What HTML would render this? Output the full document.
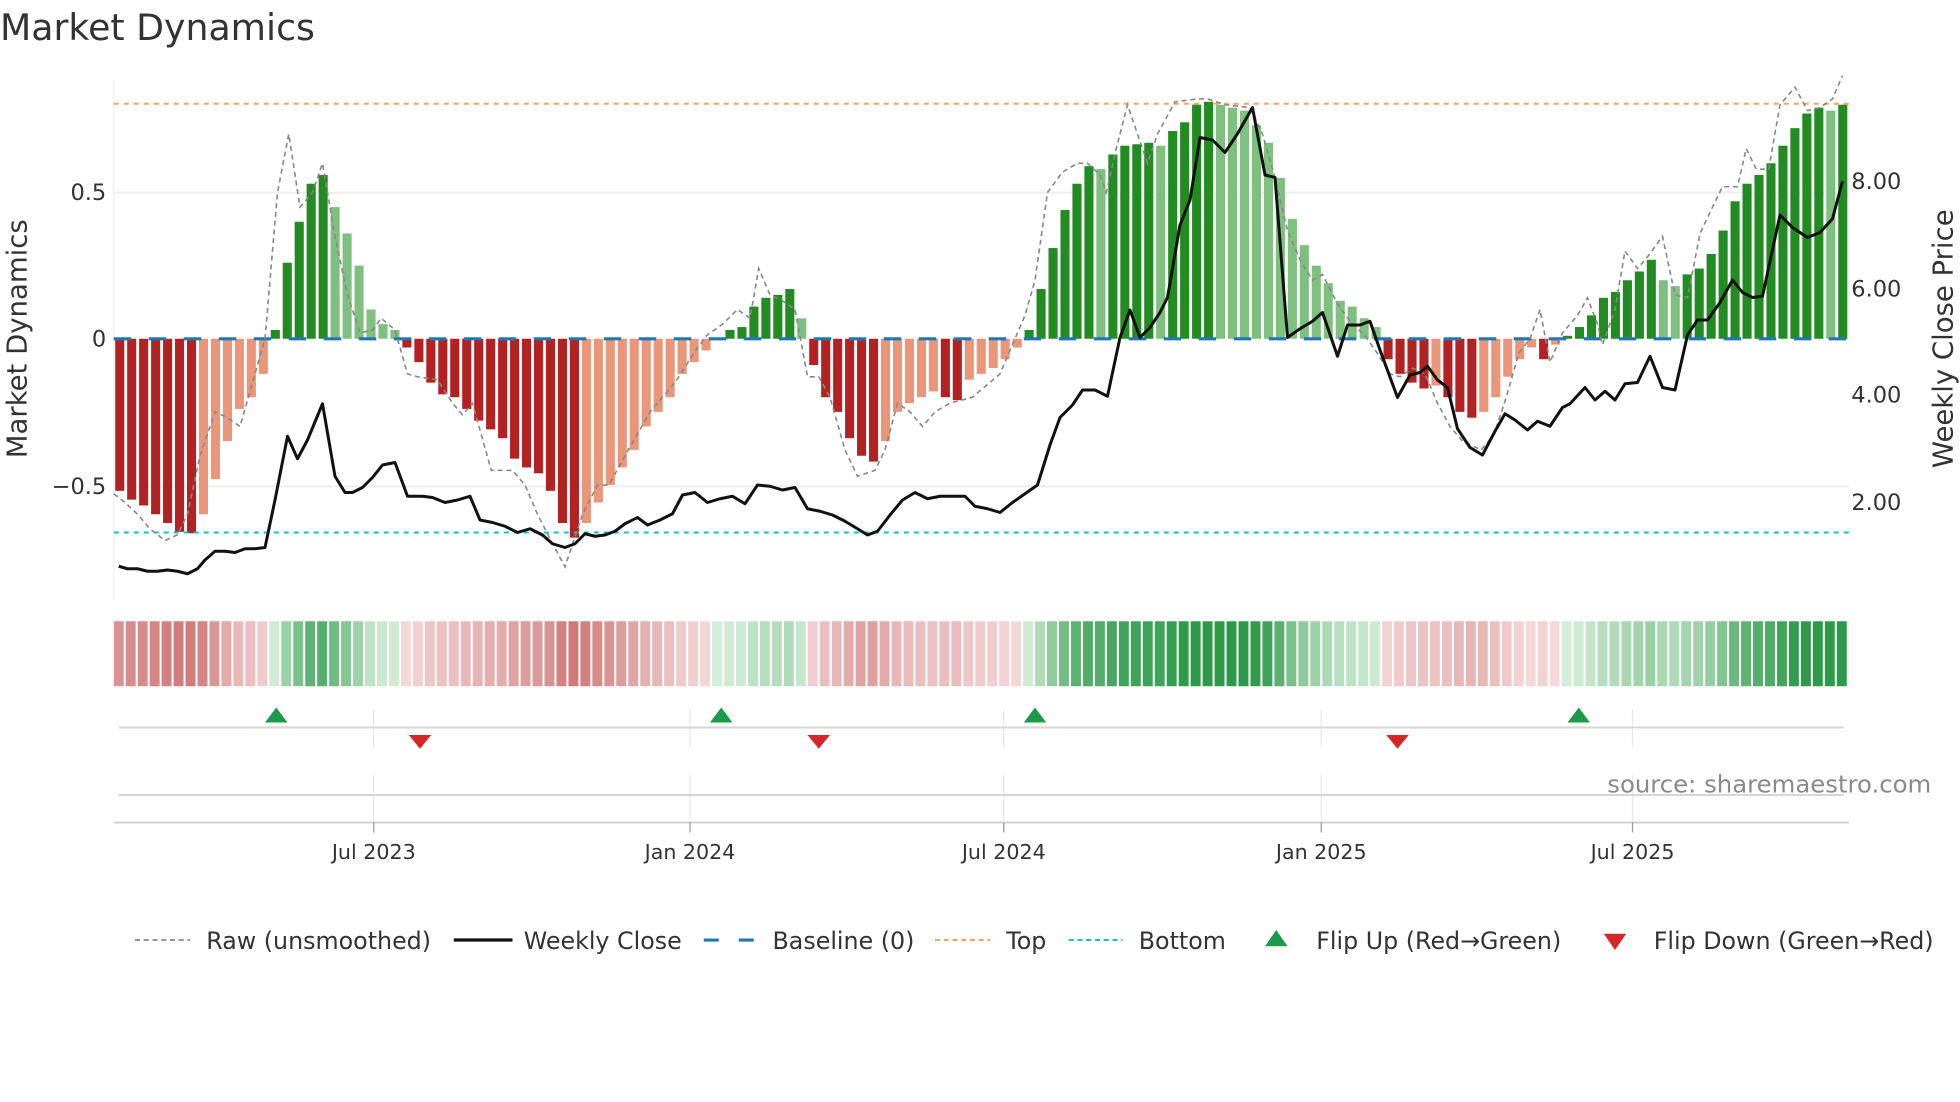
<!DOCTYPE html>
<html><head><meta charset="utf-8">
<style>
html,body{margin:0;padding:0;background:#fff;}
svg{display:block;}
text{font-family:"DejaVu Sans","Liberation Sans",sans-serif;fill:#333;}
</style></head>
<body>
<svg id="s" width="1960" height="1102" viewBox="0 0 1568 881.6" xmlns="http://www.w3.org/2000/svg">
<text x="0" y="32" font-size="29">Market Dynamics</text>
</svg>
<script>
var s=document.getElementById('s');var h='';
function Y(v){return 271-234*v;}
h+='<line x1="91" y1="65" x2="91" y2="480" stroke="#eceef3" stroke-width="1"/>';
h+='<line x1="91" y1="154" x2="1479" y2="154" stroke="#eceef3" stroke-width="1.5"/>';
h+='<line x1="91" y1="389" x2="1479" y2="389" stroke="#eceef3" stroke-width="1.5"/>';
h+='<text x="85" y="160" font-size="18" text-anchor="end">0.5</text>';
h+='<text x="85" y="277" font-size="18" text-anchor="end">0</text>';
h+='<text x="85" y="395" font-size="18" text-anchor="end">\u22120.5</text>';
h+='<text transform="translate(21,271) rotate(-90)" font-size="22" text-anchor="middle">Market Dynamics</text>';
[["8.00",145],["6.00",231],["4.00",316],["2.00",402]].forEach(function(a){h+='<text x="1481" y="'+(a[1]+6)+'" font-size="18">'+a[0]+'</text>';});
h+='<text transform="translate(1562,271) rotate(-90)" font-size="22" text-anchor="middle">Weekly Close Price</text>';
var v=[-0.52,-0.55,-0.57,-0.6,-0.63,-0.66,-0.665,
-0.6,-0.48,-0.35,-0.24,-0.2,-0.12,
0.03,0.26,0.4,0.53,0.56,
0.45,0.36,0.25,0.1,0.05,0.03,
-0.03,-0.08,-0.15,-0.19,-0.2,-0.24,-0.28,-0.31,-0.34,-0.41,-0.44,-0.46,-0.52,-0.63,-0.68,
-0.63,-0.56,-0.5,-0.44,-0.38,-0.3,-0.25,-0.2,-0.12,-0.08,-0.04,
0.003,0.03,0.04,0.11,0.14,0.15,0.17,0.07,
-0.09,-0.2,-0.25,-0.34,-0.4,-0.42,
-0.35,-0.25,-0.22,-0.2,-0.18,-0.2,-0.21,-0.14,-0.12,-0.1,-0.07,-0.03,
0.03,0.17,0.31,0.44,0.53,0.59,0.58,0.63,0.66,0.665,0.67,
0.66,0.71,0.74,0.8,0.81,
0.8,0.79,0.78,0.73,0.67,0.55,0.41,0.32,0.25,0.19,0.13,0.11,0.07,0.04,
-0.07,-0.12,-0.15,-0.17,-0.16,-0.2,-0.25,-0.27,
-0.25,-0.2,-0.13,-0.07,-0.03,-0.07,-0.02,
0.01,0.04,0.08,0.14,0.16,0.2,0.23,0.27,
0.2,0.18,0.22,0.24,0.29,0.37,0.47,0.53,0.56,0.6,0.66,0.72,0.77,0.79,0.78,0.8];
var N=v.length,P=1388/N;
h+='<line x1="91" y1="83" x2="1479" y2="83" stroke="#f4a460" stroke-width="1.6" stroke-dasharray="4,4"/>';
for(var i=0;i<N;i++){var x=91+P*i+P*0.12,w=P*0.76,a=v[i],p=i?v[i-1]:0;
var dark=Math.abs(a)>=Math.abs(p)||(a*p<0);var c=a>=0?(dark?'#228b22':'#7fbf7f'):(dark?'#b22222':'#e9967a');
var y0=Math.min(Y(a),271),hh=Math.abs(Y(a)-271);h+='<rect x="'+x.toFixed(2)+'" y="'+y0.toFixed(2)+'" width="'+w.toFixed(2)+'" height="'+hh.toFixed(2)+'" fill="'+c+'"/>';
var t=Math.min(Math.abs(a)/0.75,1),col;
if(a<0){col='rgb('+Math.round(246-42*t)+','+Math.round(220-108*t)+','+Math.round(220-108*t)+')';}
else{col='rgb('+Math.round(214-170*t)+','+Math.round(238-84*t)+','+Math.round(218-146*t)+')';}
h+='<rect x="'+(91+P*i).toFixed(2)+'" y="497" width="'+(P-1.6).toFixed(2)+'" height="52" fill="'+col+'"/>';
}
h+='<line x1="91" y1="271" x2="1479" y2="271" stroke="#1f77b4" stroke-width="2.5" stroke-dasharray="14,14"/>';
h+='<line x1="91" y1="426" x2="1479" y2="426" stroke="#17becf" stroke-width="1.6" stroke-dasharray="4,4"/>';
var raw=[[91,-0.53],[100,-0.56],[110,-0.6],[120,-0.65],[132,-0.69],[142,-0.67],[150,-0.6],[160,-0.4],[172,-0.25],[182,-0.27],[192,-0.3],[202,-0.15],[212,0],[222,0.5],[231,0.7],[240,0.45],[250,0.5],[258,0.6],[268,0.35],[278,0.15],[288,0.02],[298,0.03],[305,0.07],[316,0.03],[326,-0.12],[334,-0.13],[350,-0.14],[362,-0.22],[370,-0.26],[378,-0.22],[393,-0.45],[410,-0.45],[420,-0.5],[430,-0.6],[442,-0.7],[452,-0.78],[466,-0.6],[478,-0.5],[487,-0.5],[500,-0.4],[520,-0.25],[540,-0.15],[555,-0.05],[565,0.01],[578,0.05],[590,0.1],[600,0.07],[607,0.24],[616,0.15],[626,0.13],[636,0.1],[646,-0.13],[655,-0.13],[664,-0.2],[676,-0.38],[686,-0.47],[700,-0.45],[708,-0.38],[718,-0.22],[728,-0.25],[738,-0.3],[748,-0.25],[760,-0.22],[778,-0.2],[800,-0.12],[812,0],[820,0.08],[828,0.2],[838,0.5],[850,0.57],[862,0.6],[870,0.6],[880,0.56],[885,0.5],[893,0.65],[902,0.8],[910,0.7],[918,0.6],[926,0.7],[940,0.81],[958,0.82],[966,0.82],[980,0.8],[1000,0.79],[1010,0.7],[1020,0.55],[1030,0.37],[1040,0.27],[1050,0.2],[1058,0.22],[1070,0.12],[1080,0.06],[1092,0.01],[1102,-0.05],[1112,-0.12],[1120,-0.13],[1130,-0.1],[1140,-0.12],[1150,-0.22],[1160,-0.3],[1170,-0.35],[1185,-0.38],[1195,-0.33],[1205,-0.2],[1215,-0.05],[1224,0],[1232,0.1],[1240,-0.08],[1250,0.02],[1262,0.08],[1270,0.14],[1278,0.05],[1282,-0.02],[1292,0.1],[1300,0.3],[1310,0.24],[1318,0.28],[1330,0.35],[1340,0.15],[1350,0.14],[1360,0.36],[1370,0.45],[1378,0.52],[1390,0.52],[1397,0.65],[1405,0.58],[1415,0.58],[1424,0.8],[1436,0.86],[1446,0.78],[1456,0.79],[1466,0.82],[1474,0.9]];
h+='<polyline fill="none" stroke="#888" stroke-width="1.3" stroke-dasharray="4,3" points="'+raw.map(function(q){return q[0]+','+Y(q[1]).toFixed(1);}).join(' ')+'"/>';
var pr=[[95,453],[102,455],[110,455],[118,457],[126,457],[134,456],[142,457],[150,459],[158,455],[164,448],[172,441],[180,441],[188,442],[196,439],[204,439],[212,438],[220,400],[230,349],[238,367],[246,352],[258,323],[268,381],[276,394],[282,394],[290,390],[298,382],[306,372],[316,370],[326,397],[338,397],[346,398],[356,402],[366,400],[376,397],[384,416],[394,418],[404,421],[414,426],[424,423],[434,428],[442,435],[452,438],[460,435],[468,427],[476,429],[484,428],[492,425],[500,419],[510,414],[518,420],[528,416],[538,411],[546,396],[556,394],[566,402],[576,399],[586,397],[596,403],[606,388],[616,389],[626,392],[636,390],[646,407],[656,409],[666,412],[676,417],[686,423],[694,428],[702,425],[712,412],[722,400],[732,394],[742,399],[752,397],[762,397],[772,397],[780,405],[790,407],[800,410],[810,402],[820,395],[830,388],[840,356],[848,334],[858,324],[866,312],[876,312],[886,317],[896,270],[904,248],[912,270],[920,262],[928,250],[934,238],[944,180],[952,160],[960,110],[970,112],[980,122],[990,107],[1002,86],[1012,140],[1020,142],[1030,270],[1040,263],[1050,257],[1058,250],[1070,285],[1078,260],[1088,260],[1096,257],[1104,280],[1118,318],[1128,300],[1136,298],[1142,293],[1150,304],[1158,310],[1166,343],[1176,358],[1186,364],[1196,345],[1204,331],[1212,336],[1222,344],[1230,337],[1240,341],[1250,326],[1256,323],[1268,310],[1276,320],[1284,313],[1292,320],[1300,307],[1310,306],[1320,285],[1330,310],[1340,312],[1350,268],[1358,256],[1366,256],[1376,242],[1386,224],[1394,234],[1402,238],[1410,237],[1424,172],[1434,182],[1446,190],[1456,186],[1466,175],[1474,145]];
h+='<polyline fill="none" stroke="#111" stroke-width="2.4" stroke-linejoin="round" points="'+pr.map(function(q){return q.join(',');}).join(' ')+'"/>';
[299,552,803,1057,1306].forEach(function(x){h+='<line x1="'+x+'" y1="568" x2="'+x+'" y2="598" stroke="#e6e8ee" stroke-width="1"/><line x1="'+x+'" y1="620" x2="'+x+'" y2="658" stroke="#e6e8ee" stroke-width="1"/>';});
h+='<line x1="95" y1="582" x2="1475" y2="582" stroke="#d6d6d6" stroke-width="1.6"/>';
h+='<line x1="95" y1="636" x2="1475" y2="636" stroke="#d6d6d6" stroke-width="1.6"/>';
h+='<line x1="91" y1="658" x2="1479" y2="658" stroke="#d0d0d0" stroke-width="1.6"/>';
[221,577,828,1263].forEach(function(x){h+='<polygon points="'+(x-9)+',578 '+(x+9)+',578 '+x+',566" fill="#1a9a4a"/>';});
[336,655,1118].forEach(function(x){h+='<polygon points="'+(x-9)+',588 '+(x+9)+',588 '+x+',599" fill="#d62728"/>';});
h+='<text x="1545" y="634" font-size="19.5" style="fill:#8a8a8a" text-anchor="end">source: sharemaestro.com</text>';
[["Jul 2023",299],["Jan 2024",552],["Jul 2024",803],["Jan 2025",1057],["Jul 2025",1306]].forEach(function(a){h+='<line x1="'+a[1]+'" y1="658" x2="'+a[1]+'" y2="666" stroke="#999"/><text x="'+a[1]+'" y="687" font-size="16.5" text-anchor="middle">'+a[0]+'</text>';});
var ly=752;
h+='<line x1="108" y1="'+ly+'" x2="152" y2="'+ly+'" stroke="#888" stroke-width="1.4" stroke-dasharray="4,3"/><text x="165" y="'+(ly+7)+'" font-size="19">Raw (unsmoothed)</text>';
h+='<line x1="363" y1="'+ly+'" x2="410" y2="'+ly+'" stroke="#111" stroke-width="2.6"/><text x="419" y="'+(ly+7)+'" font-size="19">Weekly Close</text>';
h+='<line x1="563" y1="'+ly+'" x2="605" y2="'+ly+'" stroke="#1f77b4" stroke-width="2.5" stroke-dasharray="12,16"/><text x="618" y="'+(ly+7)+'" font-size="19">Baseline (0)</text>';
h+='<line x1="748" y1="'+ly+'" x2="792" y2="'+ly+'" stroke="#f4a460" stroke-width="1.6" stroke-dasharray="4,3"/><text x="805" y="'+(ly+7)+'" font-size="19">Top</text>';
h+='<line x1="855" y1="'+ly+'" x2="898" y2="'+ly+'" stroke="#17becf" stroke-width="1.6" stroke-dasharray="4,3"/><text x="911" y="'+(ly+7)+'" font-size="19">Bottom</text>';
h+='<polygon points="1012,757 1030,757 1021,744" fill="#1a9a4a"/><text x="1053" y="'+(ly+7)+'" font-size="19">Flip Up (Red\u2192Green)</text>';
h+='<polygon points="1283,747 1301,747 1292,760" fill="#d62728"/><text x="1323" y="'+(ly+7)+'" font-size="19">Flip Down (Green\u2192Red)</text>';
s.insertAdjacentHTML('beforeend',h);
</script>
</body></html>
